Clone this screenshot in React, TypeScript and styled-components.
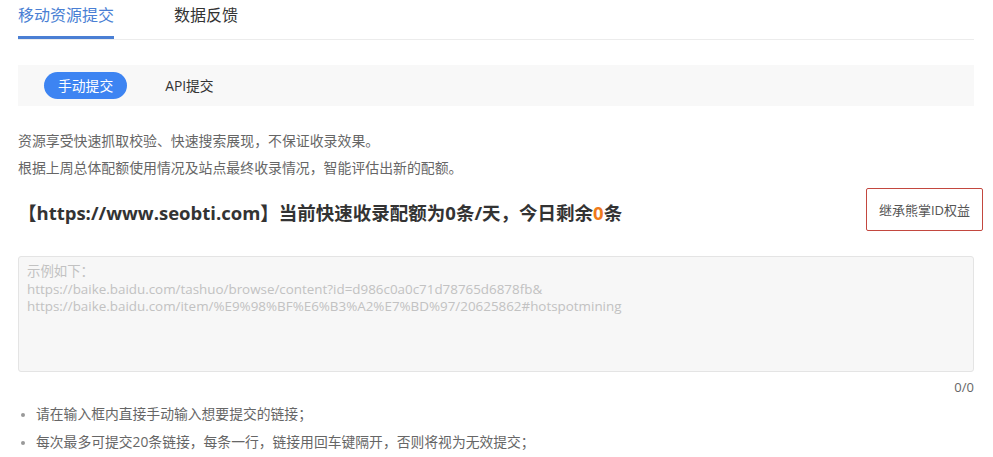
import React from "react";
import styled, { createGlobalStyle } from "styled-components";

const TABS = ["移动资源提交", "数据反馈"];
const MODES = ["手动提交", "API提交"];
const INTRO = [
  "资源享受快速抓取校验、快速搜索展现，不保证收录效果。",
  "根据上周总体配额使用情况及站点最终收录情况，智能评估出新的配额。",
];
const PLACEHOLDER = [
  "示例如下：",
  "https://baike.baidu.com/tashuo/browse/content?id=d986c0a0c71d78765d6878fb&",
  "https://baike.baidu.com/item/%E9%98%BF%E6%B3%A2%E7%BD%97/20625862#hotspotmining",
].join("\n");
const TIPS = [
  "请在输入框内直接手动输入想要提交的链接；",
  "每次最多可提交20条链接，每条一行，链接用回车键隔开，否则将视为无效提交；",
];

const GlobalStyle = createGlobalStyle`
  body {
    margin: 0;
    background: #fff;
    font-family: "Open Sans", "Noto Sans CJK SC", sans-serif;
    color: #333;
  }
`;

function App() {
  return (
    <>
      <GlobalStyle />
      <Page>
        <TabBar>
          {TABS.map((t, i) => (
            <Tab key={t} active={i === 0}>
              {t}
            </Tab>
          ))}
        </TabBar>

        <ModeBar>
          {MODES.map((m, i) => (
            <ModeButton key={m} active={i === 0}>
              {m}
            </ModeButton>
          ))}
        </ModeBar>

        <Intro>
          {INTRO.map((line) => (
            <p key={line}>{line}</p>
          ))}
        </Intro>

        <QuotaRow>
          <Quota>
            【https://www.seobti.com】当前快速收录配额为0条/天，今日剩余
            <Hot>0</Hot>条
          </Quota>
          <InheritButton>继承熊掌ID权益</InheritButton>
        </QuotaRow>

        <LinkInput placeholder={PLACEHOLDER} />
        <Counter>0/0</Counter>

        <Tips>
          {TIPS.map((t) => (
            <li key={t}>{t}</li>
          ))}
        </Tips>
      </Page>
    </>
  );
}

const Page = styled.div`
  padding: 0 19px 0 18px;
`;

const TabBar = styled.div`
  display: flex;
  gap: 60px;
  height: 39px;
  border-bottom: 1px solid #ececec;
`;

const Tab = styled.div<{ active?: boolean }>`
  box-sizing: border-box;
  height: 39px;
  padding-top: 3px;
  font-size: 16px;
  line-height: 24px;
  color: ${(p) => (p.active ? "#4a7fd4" : "#333")};
  border-bottom: 3px solid ${(p) => (p.active ? "#4a7fd4" : "transparent")};
  cursor: pointer;
`;

const ModeBar = styled.div`
  display: flex;
  align-items: center;
  gap: 38px;
  margin-top: 25px;
  height: 41px;
  padding-left: 26px;
  background: #f8f8f8;
`;

const ModeButton = styled.div<{ active?: boolean }>`
  height: 27px;
  line-height: 27px;
  padding: ${(p) => (p.active ? "0 14px" : "0")};
  border-radius: 14px;
  font-size: 13.8px;
  color: ${(p) => (p.active ? "#fff" : "#333")};
  background: ${(p) => (p.active ? "#3d84f2" : "transparent")};
  cursor: pointer;
`;

const Intro = styled.div`
  margin-top: 21px;

  p {
    margin: 0;
    font-size: 13.9px;
    line-height: 27px;
    color: #666;
  }
`;

const QuotaRow = styled.div`
  display: flex;
  align-items: center;
  justify-content: space-between;
  margin-top: 7px;
  margin-right: -9px;
`;

const Quota = styled.h2`
  margin: 4px 0 0;
  font-size: 18.5px;
  font-weight: 700;
  color: #333;
`;

const Hot = styled.span`
  color: #f07a1c;
`;

const InheritButton = styled.button`
  box-sizing: border-box;
  width: 117px;
  height: 43px;
  border: 1px solid #c3473f;
  border-radius: 2px;
  background: #fff;
  font-family: inherit;
  font-size: 13px;
  color: #555;
  cursor: pointer;
`;

const LinkInput = styled.textarea`
  display: block;
  box-sizing: border-box;
  width: 100%;
  height: 116px;
  margin-top: 25px;
  padding: 6px 8px;
  border: 1px solid #e4e4e4;
  border-radius: 3px;
  background: #f7f7f7;
  font-family: "Open Sans", "Noto Sans CJK SC", sans-serif;
  font-size: 13.4px;
  line-height: 17.5px;
  color: #333;
  resize: none;
  outline: none;

  &::placeholder {
    color: #c2c2c2;
  }
`;

const Counter = styled.div`
  margin-top: 6px;
  text-align: right;
  font-size: 13px;
  line-height: 18px;
  color: #666;
`;

const Tips = styled.ul`
  margin: 4px 0 0;
  padding-left: 18px;

  li {
    font-size: 13.8px;
    line-height: 28px;
    color: #666;
  }

  li::marker {
    color: #999;
    font-size: 11px;
  }
`;

export default App;
